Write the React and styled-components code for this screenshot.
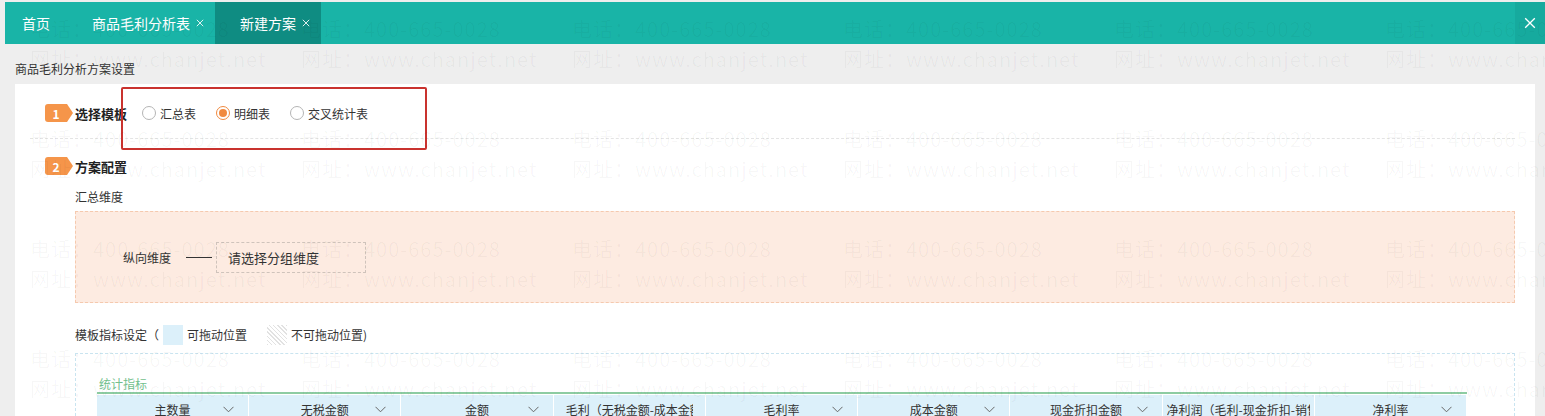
import React from 'react';
import styled, { createGlobalStyle } from 'styled-components';

const GlobalStyle = createGlobalStyle`
  html, body {
    margin: 0;
    padding: 0;
    background: #eeeeee;
  }
  body {
    font-family: "Noto Sans CJK SC", "Noto Sans", sans-serif;
    color: #333;
  }
`;

const Page = styled.div`
  position: relative;
  width: 1545px;
  height: 416px;
  overflow: hidden;
  background: #eeeeee;
  padding-top: 2px;
  box-sizing: border-box;
`;

const TabBar = styled.div`
  display: flex;
  align-items: stretch;
  height: 42px;
  margin-left: 5px;
  background: #19b4a7;
`;

const Tab = styled.div`
  display: flex;
  align-items: center;
  gap: 6px;
  padding: 0 ${(p) => (p.$home ? 25 : 11)}px 0 ${(p) => (p.$active ? 25 : 17)}px;
  background: ${(p) => (p.$active ? '#0f8c82' : 'transparent')};
  color: #fff;
  font-size: 14px;
`;

const CloseAll = styled.div`
  margin-left: auto;
  width: 30px;
  display: flex;
  align-items: center;
  justify-content: center;
  background: #16aa9e;
`;

const PageTitle = styled.div`
  height: 40px;
  box-sizing: border-box;
  display: flex;
  align-items: flex-end;
  padding: 0 0 7px 15px;
  font-size: 12px;
  line-height: 16px;
  color: #333;
`;

const Panel = styled.div`
  position: relative;
  margin: 0 10px 0 15px;
  background: #fff;
  padding: 20px 20px 0 15px;
  height: 340px;
`;

const StepRow = styled.div`
  display: flex;
  align-items: center;
  height: 18px;
  padding-left: 15px;
`;

const StepSection = styled.div`
  padding-bottom: 16px;
  border-bottom: 1px dashed #e4e4e4;
  margin-bottom: 18px;
`;

const Badge = styled.div`
  position: relative;
  width: 22px;
  height: 18px;
  margin-right: 8px;
  background: #f5954a;
  border-radius: 3px 0 0 3px;
  color: #fff;
  font-size: 12px;
  font-weight: bold;
  display: flex;
  align-items: center;
  justify-content: center;
  &::after {
    content: '';
    position: absolute;
    right: -6px;
    top: 0;
    border-top: 9px solid transparent;
    border-bottom: 9px solid transparent;
    border-left: 6px solid #f5954a;
  }
`;

const StepLabel = styled.span`
  font-size: 13px;
  font-weight: 600;
  color: #222;
`;

const RadioGroup = styled.div`
  display: grid;
  grid-template-columns: 74px 74px auto;
  align-items: center;
  margin-left: 15px;
`;

const RadioItem = styled.label`
  display: flex;
  align-items: center;
  gap: 4px;
  font-size: 12px;
  color: #333;
`;

const RadioDot = styled.span`
  width: 12px;
  height: 12px;
  border-radius: 50%;
  border: 1px solid ${(p) => (p.$checked ? '#f08a40' : '#b5b5b5')};
  display: flex;
  align-items: center;
  justify-content: center;
  &::after {
    content: '';
    width: 8px;
    height: 8px;
    border-radius: 50%;
    background: ${(p) => (p.$checked ? '#f08a40' : 'transparent')};
  }
`;

const Highlight = styled.div`
  position: absolute;
  left: 106px;
  top: 3px;
  width: 302px;
  height: 59px;
  border: 2px solid #c9322e;
  border-radius: 2px;
  pointer-events: none;
`;

const Block = styled.div`
  padding-left: 45px;
`;

const BlockLabel = styled.div`
  font-size: 12px;
  line-height: 16px;
  color: #333;
  margin: ${(p) => p.$margin || '0'};
  display: flex;
  align-items: center;
`;

const DimensionBox = styled.div`
  height: 92px;
  box-sizing: border-box;
  background: #fdebe1;
  border: 1px dashed #f5c9ae;
  display: flex;
  align-items: center;
  padding-left: 47px;
  margin-top: 6px;
`;

const DimLabel = styled.span`
  font-size: 12px;
  color: #333;
`;

const Connector = styled.span`
  width: 26px;
  height: 1px;
  background: #333;
  margin: 0 4px 0 15px;
`;

const GroupSelect = styled.div`
  width: 150px;
  height: 31px;
  box-sizing: border-box;
  border: 1px dashed #cfc3bb;
  display: flex;
  align-items: center;
  padding-left: 11px;
  font-size: 13px;
  color: #333;
`;

const Swatch = styled.span`
  width: 20px;
  height: 20px;
  margin: 0 4px;
  background: ${(p) =>
    p.$hatched
      ? 'repeating-linear-gradient(45deg, #e2e2e2 0 1px, #fff 1px 3px)'
      : '#dcf0fa'};
`;

const Gap = styled.span`
  width: ${(p) => p.$w}px;
`;

const IndicatorBox = styled.div`
  margin-top: 8px;
  border: 1px dashed #c9e4f0;
  border-bottom: none;
  height: 120px;
  padding: 22px 47px 0 21px;
`;

const GroupTitle = styled.div`
  font-size: 12px;
  line-height: 16px;
  color: #72c08c;
  padding-left: 2px;
  border-bottom: 2px solid #8dcca2;
`;

const HeaderRow = styled.div`
  display: grid;
  grid-template-columns: repeat(9, 1fr);
  border-top: 1px solid #fff;
`;

const HeaderCell = styled.div`
  position: relative;
  height: 28px;
  background: #dcf0fa;
  border-right: 1px solid #fff;
  display: flex;
  align-items: center;
  justify-content: ${(p) => (p.$long ? 'flex-start' : 'center')};
  padding: 0 ${(p) => p.$pad || 0}px;
  overflow: hidden;
  white-space: nowrap;
  font-size: 12px;
  color: #333;
`;

const CellText = styled.span`
  overflow: hidden;
`;

const Chevron = styled.svg`
  position: absolute;
  right: 14px;
  top: 11px;
`;

const Watermark = styled.div`
  position: absolute;
  inset: 0;
  pointer-events: none;
  display: grid;
  grid-template-columns: repeat(6, 271px);
  grid-auto-rows: 110px;
  padding: 17px 0 0 30px;
  z-index: 5;
`;

const Mark = styled.div`
  display: flex;
  flex-direction: column;
  gap: 6px;
  font-family: "Noto Sans CJK SC", "Noto Sans", sans-serif;
  font-size: 20px;
  line-height: 24px;
  letter-spacing: 1px;
  white-space: nowrap;
  color: rgba(0, 0, 0, 0.035);
`;

const columns = [
  { label: '主数量' },
  { label: '无税金额' },
  { label: '金额' },
  { label: '毛利（无税金额-成本金额）', long: true, pad: 12 },
  { label: '毛利率' },
  { label: '成本金额' },
  { label: '现金折扣金额' },
  { label: '净利润（毛利-现金折扣-销售费用）', long: true, pad: 4 },
  { label: '净利率' },
];

const XIcon = ({ size = 8 }) => (
  <svg width={size} height={size} viewBox="0 0 10 10">
    <path d="M1 1L9 9M9 1L1 9" stroke="#fff" strokeWidth="1.1" fill="none" />
  </svg>
);

export default function App() {
  return (
    <Page>
      <GlobalStyle />
      <TabBar>
        <Tab $home>首页</Tab>
        <Tab>
          商品毛利分析表 <XIcon />
        </Tab>
        <Tab $active>
          新建方案 <XIcon />
        </Tab>
        <CloseAll>
          <XIcon size={12} />
        </CloseAll>
      </TabBar>
      <PageTitle>商品毛利分析方案设置</PageTitle>
      <Panel>
        <StepSection>
          <StepRow>
            <Badge>1</Badge>
            <StepLabel>选择模板</StepLabel>
            <RadioGroup>
              <RadioItem>
                <RadioDot />
                汇总表
              </RadioItem>
              <RadioItem>
                <RadioDot $checked />
                明细表
              </RadioItem>
              <RadioItem>
                <RadioDot />
                交叉统计表
              </RadioItem>
            </RadioGroup>
          </StepRow>
        </StepSection>
        <Highlight />
        <StepRow>
          <Badge>2</Badge>
          <StepLabel>方案配置</StepLabel>
        </StepRow>
        <Block>
          <BlockLabel $margin="14px 0 0">汇总维度</BlockLabel>
          <DimensionBox>
            <DimLabel>纵向维度</DimLabel>
            <Connector />
            <GroupSelect>请选择分组维度</GroupSelect>
          </DimensionBox>
          <BlockLabel $margin="22px 0 0">
            模板指标设定（<Swatch />
            可拖动位置
            <Gap $w={16} />
            <Swatch $hatched />
            不可拖动位置)
          </BlockLabel>
          <IndicatorBox>
            <GroupTitle>统计指标</GroupTitle>
            <HeaderRow>
              {columns.map((c) => (
                <HeaderCell key={c.label} $long={c.long} $pad={c.pad}>
                  <CellText>{c.label}</CellText>
                  {!c.long && (
                    <Chevron width="11" height="7" viewBox="0 0 11 7">
                      <path d="M0.5 0.8L5.5 5.8L10.5 0.8" stroke="#666" strokeWidth="1" fill="none" />
                    </Chevron>
                  )}
                </HeaderCell>
              ))}
            </HeaderRow>
          </IndicatorBox>
        </Block>
      </Panel>
      <Watermark>
        {Array.from({ length: 24 }).map((_, i) => (
          <Mark key={i}>
            <span>电话：400-665-0028</span>
            <span>网址：www.chanjet.net</span>
          </Mark>
        ))}
      </Watermark>
    </Page>
  );
}
